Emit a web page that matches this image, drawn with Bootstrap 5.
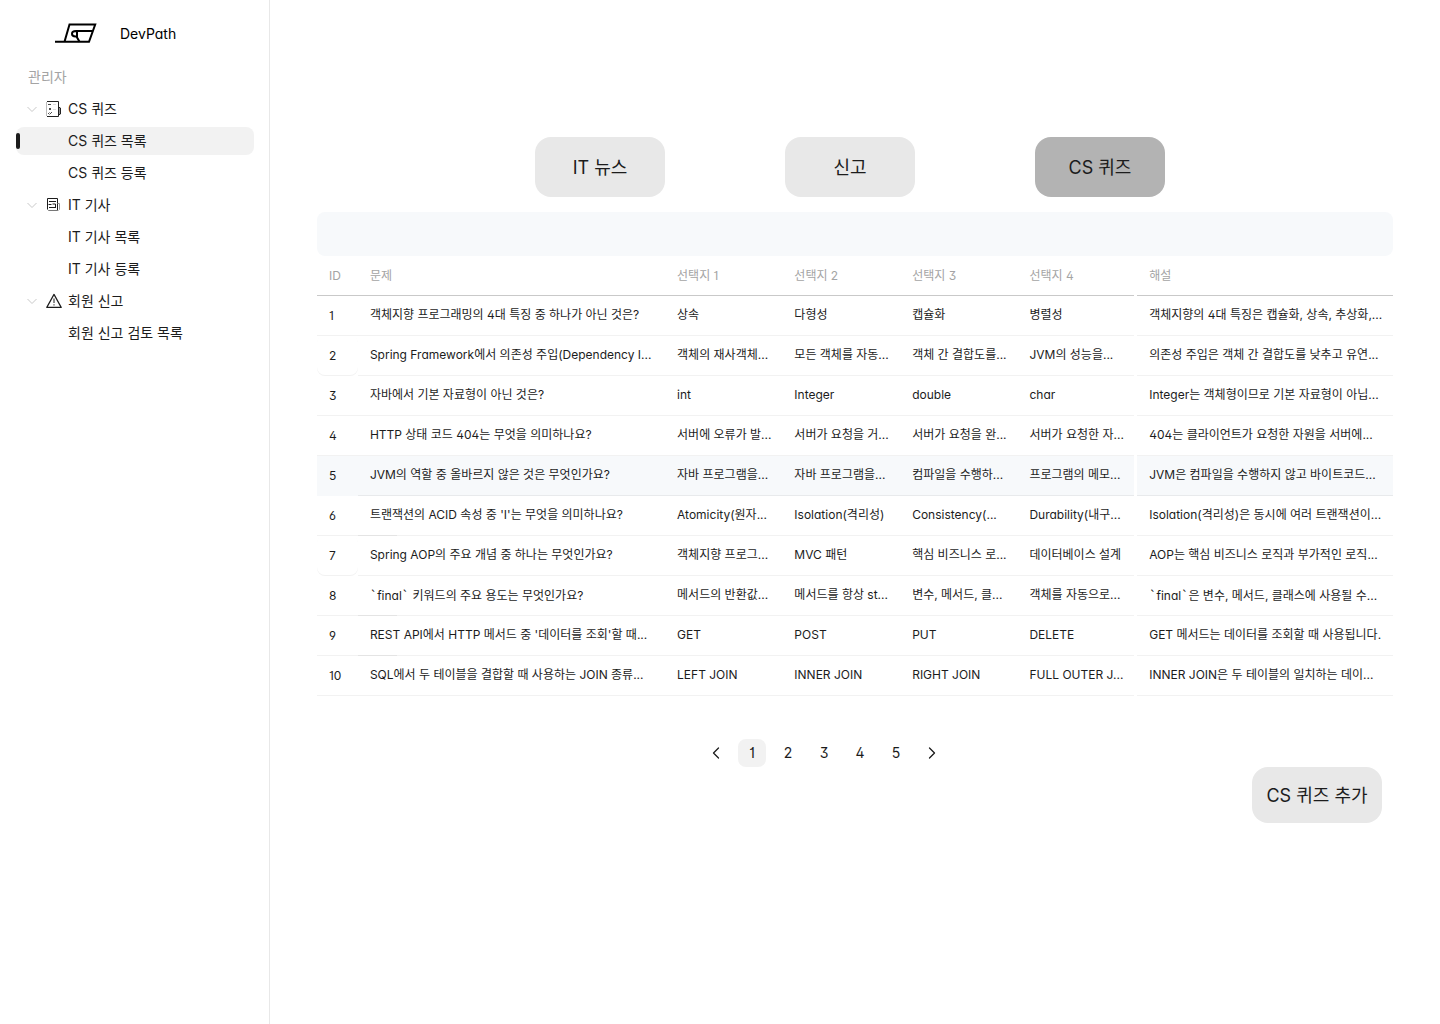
<!DOCTYPE html>
<html lang="ko">
<head>
<meta charset="utf-8">
<meta name="viewport" content="width=device-width, initial-scale=1">
<title>DevPath</title>
<link href="https://cdn.jsdelivr.net/npm/bootstrap@5.3.0/dist/css/bootstrap.min.css" rel="stylesheet">
<style>
  :root { --ink: #1c1c1c; --faint: #a4a4a4; --line: #f2f2f2; --soft: #f7f9fb; }
  body { font-family: Inter, "Noto Sans CJK KR", sans-serif; font-feature-settings: "ss01", "cv01", "cv11"; font-size: 14px; line-height: 20px; color: var(--ink); background: #fff; }
  a, a:hover { color: inherit; text-decoration: none; }
  .side { width: 270px; border-right: 1px solid #e8e8e8; padding: 16px 15px 16px 16px; }
  .brand { height: 35px; padding-left: 38px; gap: 22px; margin-bottom: 12px; color: #000; }
  .side-item { position: relative; height: 28px; border-radius: 8px; padding-left: 10px; }
  .side-item .chev { margin-right: 8px; }
  .side-item .pic { margin-right: 6px; }
  .side-sub { padding-left: 52px; }
  .side-on { background: var(--line); }
  .side-on::before { content: ""; position: absolute; left: 0; top: 6px; width: 4px; height: 16px; border-radius: 2px; background: var(--ink); }
  .side-title { padding-left: 12px; color: var(--faint); }
  .work { padding: 137px 47px 48px; min-width: 0; }
  .tabs-row { gap: 120px; padding-right: 10px; margin-bottom: 15px; }
  .pill { width: 130px; height: 60px; border: 0; border-radius: 16px; background: #e8e8e8; color: var(--ink); font-size: 18px; line-height: 24px; padding: 2px 0 0; white-space: nowrap; font-feature-settings: inherit; }
  .pill-on { background: #b3b3b3; }
  .pill-add { height: 56px; }
  .band { height: 44px; border-radius: 8px; background: var(--soft); }
  .quiz { table-layout: fixed; width: 100%; border-collapse: separate; border-spacing: 0; font-size: 12px; line-height: 18px; margin-bottom: 43px; }
  .quiz th, .quiz td { height: 40px; padding: 0 0 2px 12px; white-space: nowrap; vertical-align: middle; box-shadow: inset 0 -1px var(--line); background-clip: padding-box; }
  .quiz th { font-weight: 400; color: var(--faint); padding-bottom: 0; box-shadow: inset 0 -1px #c9c9c9; }
  .quiz td:first-child { padding-bottom: 0; }
  .quiz tr > :last-child { border-left: 3px solid #fff; }
  .quiz .row-on td { background-color: var(--soft); box-shadow: inset 0 -1px #e8eaec; }
  .quiz .row-on td:first-child { box-shadow: none; }
  .quiz .row-round td:first-child { border-radius: 8px; }
  .quiz .row-mark td:nth-child(2) { box-shadow: none; background: linear-gradient(#e4e4e4, #e4e4e4) left bottom / 39px 1px no-repeat, linear-gradient(#f2f2f2, #f2f2f2) left bottom / 100% 1px no-repeat; }
  .tick { font-family: "Noto Sans CJK KR", sans-serif; }
  .pager { gap: 8px; padding-right: 62px; }
  .pager a { width: 28px; height: 28px; border-radius: 8px; }
  .pager .on { background: var(--line); }
  .add-row { padding-right: 11px; }
</style>
<script src="https://cdn.jsdelivr.net/npm/bootstrap@5.3.0/dist/js/bootstrap.bundle.min.js"></script>
</head>
<body>
<div class="d-flex min-vh-100">
  <aside class="side flex-shrink-0">
    <a href="#" class="brand d-flex align-items-center">
      <svg width="44" height="24" viewBox="0 0 44 24" fill="none" stroke="#000" stroke-width="2"><path d="M1 19.800H35L41.200 2.500H15.500L10.500 19.800"/><path d="M38.500 9H22C16.500 9 17 14.500 21.500 14.500H23V9M22.500 14.500L25.500 19.800"/></svg>
      <span>DevPath</span>
    </a>
    <nav class="d-flex flex-column gap-1" aria-label="관리자">
      <div class="side-item side-title d-flex align-items-center">관리자</div>
      <a href="#" class="side-item d-flex align-items-center">
        <svg class="chev" width="12" height="12" viewBox="0 0 12 12" fill="none" stroke="#c9c9c9"><path d="M1.500 4L6 8.500L10.500 4"/></svg>
        <svg class="pic" width="16" height="18" viewBox="0 0 16 18" fill="none" stroke="#222"><path d="M1 1.500H12.500V16.500H1" /><path d="M.5 2V16" stroke="#bbb"/><path d="M12.500 7.500H14V14.500H12.500"/><path d="M14.500 8V14"/><path d="M2 4.500H5M3 8L5 10M5 8L3 10M2 14L3.500 12.500M3.500 14.500L6 12" stroke-width=".8"/><path d="M7 4.500H10M7 9.500H10" stroke="#ddd"/></svg>
        <span>CS 퀴즈</span></a>
      <a href="#" class="side-item side-sub side-on d-flex align-items-center" aria-current="page">CS 퀴즈 목록</a>
      <a href="#" class="side-item side-sub d-flex align-items-center">CS 퀴즈 등록</a>
      <a href="#" class="side-item d-flex align-items-center">
        <svg class="chev" width="12" height="12" viewBox="0 0 12 12" fill="none" stroke="#c9c9c9"><path d="M1.500 4L6 8.500L10.500 4"/></svg>
        <svg class="pic" width="16" height="16" viewBox="0 0 16 16" fill="none" stroke="#1c1c1c"><path d="M1.500 12.500V1.500H11.500V13.500" /><path d="M1.500 12.500L2.500 13.500H11.500" stroke="#777"/><path d="M3 4.500H10M2.500 7.500H5.500M3 10.500H10"/><path d="M6.500 7H9.500V10"/><path d="M11.500 6.500H13.500V12.500L12.500 13.500" stroke="#999"/></svg>
        <span>IT 기사</span></a>
      <a href="#" class="side-item side-sub d-flex align-items-center">IT 기사 목록</a>
      <a href="#" class="side-item side-sub d-flex align-items-center">IT 기사 등록</a>
      <a href="#" class="side-item d-flex align-items-center">
        <svg class="chev" width="12" height="12" viewBox="0 0 12 12" fill="none" stroke="#c9c9c9"><path d="M1.500 4L6 8.500L10.500 4"/></svg>
        <svg class="pic" width="16" height="16" viewBox="0 0 16 16" fill="none" stroke="#1c1c1c" stroke-width="1.200" stroke-linejoin="round"><path d="M8 1.400L15.200 14.400H.8Z"/><path d="M8 5.500V10M8 11.200V12.500" stroke="#444"/></svg>
        <span>회원 신고</span></a>
      <a href="#" class="side-item side-sub d-flex align-items-center">회원 신고 검토 목록</a>
    </nav>
  </aside>
  <main class="work flex-grow-1">
    <div class="tabs-row d-flex justify-content-center">
      <button type="button" class="pill">IT 뉴스</button>
      <button type="button" class="pill">신고</button>
      <button type="button" class="pill pill-on">CS 퀴즈</button>
    </div>
    <div class="band"></div>
    <table class="quiz">
      <colgroup><col style="width:3.8%"><col style="width:28.55%"><col style="width:10.9%"><col style="width:10.95%"><col style="width:10.9%"><col style="width:10.85%"><col></colgroup>
      <thead><tr><th scope="col">ID</th><th scope="col">문제</th><th scope="col">선택지 1</th><th scope="col">선택지 2</th><th scope="col">선택지 3</th><th scope="col">선택지 4</th><th scope="col">해설</th></tr></thead>
      <tbody>
        <tr><td>1</td><td>객체지향 프로그래밍의 4대 특징 중 하나가 아닌 것은?</td><td>상속</td><td>다형성</td><td>캡슐화</td><td>병렬성</td><td>객체지향의 4대 특징은 캡슐화, 상속, 추상화,...</td></tr>
        <tr class="row-round"><td>2</td><td>Spring Framework에서 의존성 주입(Dependency I...</td><td>객체의 재사객체...</td><td>모든 객체를 자동...</td><td>객체 간 결합도를...</td><td>JVM의 성능을...</td><td>의존성 주입은 객체 간 결합도를 낮추고 유연...</td></tr>
        <tr><td>3</td><td>자바에서 기본 자료형이 아닌 것은?</td><td>int</td><td>Integer</td><td>double</td><td>char</td><td>Integer는 객체형이므로 기본 자료형이 아닙...</td></tr>
        <tr><td>4</td><td>HTTP 상태 코드 404는 무엇을 의미하나요?</td><td>서버에 오류가 발...</td><td>서버가 요청을 거...</td><td>서버가 요청을 완...</td><td>서버가 요청한 자...</td><td>404는 클라이언트가 요청한 자원을 서버에...</td></tr>
        <tr class="row-on"><td>5</td><td>JVM의 역할 중 올바르지 않은 것은 무엇인가요?</td><td>자바 프로그램을...</td><td>자바 프로그램을...</td><td>컴파일을 수행하...</td><td>프로그램의 메모...</td><td>JVM은 컴파일을 수행하지 않고 바이트코드...</td></tr>
        <tr class="row-mark"><td>6</td><td>트랜잭션의 ACID 속성 중 'I'는 무엇을 의미하나요?</td><td>Atomicity(원자...</td><td>Isolation(격리성)</td><td>Consistency(...</td><td>Durability(내구...</td><td>Isolation(격리성)은 동시에 여러 트랜잭션이...</td></tr>
        <tr class="row-round"><td>7</td><td>Spring AOP의 주요 개념 중 하나는 무엇인가요?</td><td>객체지향 프로그...</td><td>MVC 패턴</td><td>핵심 비즈니스 로...</td><td>데이터베이스 설계</td><td>AOP는 핵심 비즈니스 로직과 부가적인 로직...</td></tr>
        <tr class="row-mark"><td>8</td><td><span class="tick">`</span>final<span class="tick">`</span> 키워드의 주요 용도는 무엇인가요?</td><td>메서드의 반환값...</td><td>메서드를 항상 st...</td><td>변수, 메서드, 클...</td><td>객체를 자동으로...</td><td><span class="tick">`</span>final<span class="tick">`</span>은 변수, 메서드, 클래스에 사용될 수...</td></tr>
        <tr class="row-mark"><td>9</td><td>REST API에서 HTTP 메서드 중 '데이터를 조회'할 때...</td><td>GET</td><td>POST</td><td>PUT</td><td>DELETE</td><td>GET 메서드는 데이터를 조회할 때 사용됩니다.</td></tr>
        <tr><td>10</td><td>SQL에서 두 테이블을 결합할 때 사용하는 JOIN 종류...</td><td>LEFT JOIN</td><td>INNER JOIN</td><td>RIGHT JOIN</td><td>FULL OUTER J...</td><td>INNER JOIN은 두 테이블의 일치하는 데이...</td></tr>
      </tbody>
    </table>
    <nav class="pager d-flex justify-content-center" aria-label="페이지">
      <a href="#" class="d-flex align-items-center justify-content-center" aria-label="이전"><svg width="16" height="16" viewBox="0 0 16 16" fill="none" stroke="#1c1c1c" stroke-width="1.300" stroke-linecap="round" stroke-linejoin="round"><path d="M10.500 3L5.500 8L10.500 13"/></svg></a>
      <a href="#" class="on d-flex align-items-center justify-content-center" aria-current="page">1</a>
      <a href="#" class="d-flex align-items-center justify-content-center">2</a>
      <a href="#" class="d-flex align-items-center justify-content-center">3</a>
      <a href="#" class="d-flex align-items-center justify-content-center">4</a>
      <a href="#" class="d-flex align-items-center justify-content-center">5</a>
      <a href="#" class="d-flex align-items-center justify-content-center" aria-label="다음"><svg width="16" height="16" viewBox="0 0 16 16" fill="none" stroke="#1c1c1c" stroke-width="1.300" stroke-linecap="round" stroke-linejoin="round"><path d="M5.500 3L10.500 8L5.500 13"/></svg></a>
    </nav>
    <div class="add-row d-flex justify-content-end">
      <button type="button" class="pill pill-add">CS 퀴즈 추가</button>
    </div>
  </main>
</div>
</body>
</html>
